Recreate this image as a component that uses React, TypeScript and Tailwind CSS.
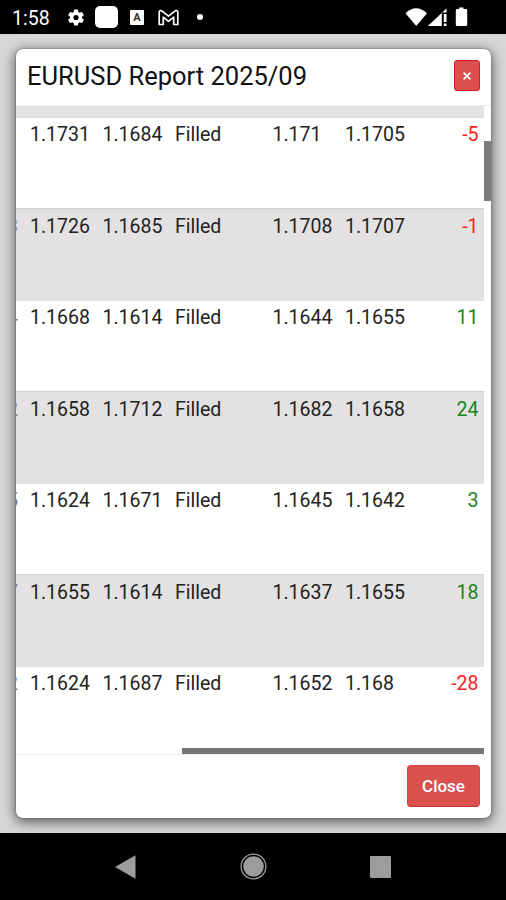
import clsx from 'clsx';

type Trade = {
  size: string;
  stop: string;
  target: string;
  status: string;
  open: string;
  close: string;
  pips: number;
};

const trades: Trade[] = [
  { size: '', stop: '1.1731', target: '1.1684', status: 'Filled', open: '1.171', close: '1.1705', pips: -5 },
  { size: '3', stop: '1.1726', target: '1.1685', status: 'Filled', open: '1.1708', close: '1.1707', pips: -1 },
  { size: '4', stop: '1.1668', target: '1.1614', status: 'Filled', open: '1.1644', close: '1.1655', pips: 11 },
  { size: '2', stop: '1.1658', target: '1.1712', status: 'Filled', open: '1.1682', close: '1.1658', pips: 24 },
  { size: '5', stop: '1.1624', target: '1.1671', status: 'Filled', open: '1.1645', close: '1.1642', pips: 3 },
  { size: '7', stop: '1.1655', target: '1.1614', status: 'Filled', open: '1.1637', close: '1.1655', pips: 18 },
  { size: '2', stop: '1.1624', target: '1.1687', status: 'Filled', open: '1.1652', close: '1.168', pips: -28 },
];

function StatusBar() {
  return (
    <header className="flex h-[34px] shrink-0 items-center bg-black pl-3 text-white">
      <span className="w-[54px] pt-[3px] text-[19.5px] leading-none">1:58</span>
      <svg className="h-[21px] w-[20px]" viewBox="0 0 24 24" fill="currentColor">
        <path d="M19.14 12.94c.04-.3.06-.61.06-.94 0-.32-.02-.64-.07-.94l2.03-1.58a.49.49 0 0 0 .12-.61l-1.92-3.32a.49.49 0 0 0-.59-.22l-2.39.96a7 7 0 0 0-1.62-.94l-.36-2.54a.48.48 0 0 0-.48-.41h-3.84a.47.47 0 0 0-.47.41l-.36 2.54c-.59.24-1.13.57-1.62.94l-2.39-.96a.48.48 0 0 0-.59.22L2.74 8.87a.47.47 0 0 0 .12.61l2.03 1.58a7.6 7.6 0 0 0-.02 1.88l-2.03 1.58a.49.49 0 0 0-.12.61l1.92 3.32c.12.22.37.29.59.22l2.39-.96c.5.38 1.03.7 1.62.94l.36 2.54c.05.24.24.41.48.41h3.84c.24 0 .44-.17.47-.41l.36-2.54a6.8 6.8 0 0 0 1.62-.94l2.39.96c.22.08.47 0 .59-.22l1.92-3.32a.47.47 0 0 0-.12-.61zM12 15.1a3.1 3.1 0 1 1 0-6.2 3.1 3.1 0 0 1 0 6.2" />
      </svg>
      <span className="ml-[9px] h-[22px] w-[23px] rounded-[5px] bg-white" />
      <span className="ml-3 flex h-[15px] w-[14px] items-center justify-center rounded-[1px] bg-white text-[11px] leading-none font-bold text-[#333]">
        A
      </span>
      <svg className="ml-[14px] h-[17px] w-[21px]" viewBox="0 0 21 17" fill="none" stroke="currentColor" strokeWidth="1.7" strokeLinejoin="round">
        <path d="M1.2 3.2Q1.5.8 3.8 1.8l6.7 5.4 6.7-5.4Q19.5.8 19.8 3.2V15.5H15.7V8.2l-5.2 4.1-5.2-4.1v7.3H1.2z" />
      </svg>
      <span className="ml-[18px] h-[6px] w-[6px] rounded-full bg-white" />
      <svg className="mr-[37px] ml-auto h-[20px] w-[64px]" viewBox="0 0 64 20" fill="currentColor">
        <path d="M.5 6.2Q11-3.5 22 6.2L11.2 19z" />
        <path d="M22.8 19 41.5 1.5v4H36.8V19z" />
        <path d="M38.8 7h2.7v8h-2.7zM38.8 16.5h2.7V19h-2.7z" />
        <path d="M54 2V.5h4.5V2h2.5q1.2 0 1.2 1.2v14.6Q62.2 19 61 19h-9q-1.2 0-1.2-1.2V3.2Q50.8 2 52 2z" />
      </svg>
    </header>
  );
}

function TradeRow({ trade, shaded }: { trade: Trade; shaded: boolean }) {
  return (
    <div
      className={clsx(
        'grid shrink-0 grid-cols-[14px_72.5px_72.5px_97.5px_72.5px_1fr_60px] text-[19.5px] leading-[26px]',
        shaded ? 'h-[93px] border-t border-[#d2d1d1] bg-[#e3e1e2] pt-[5px]' : 'h-[90px] bg-white pt-[4px]',
      )}
    >
      {/* column scrolled almost out of view */}
      <div className="flex w-[2px] justify-end overflow-hidden text-[#777]">{trade.size}</div>
      <div>{trade.stop}</div>
      <div>{trade.target}</div>
      <div>{trade.status}</div>
      <div>{trade.open}</div>
      <div>{trade.close}</div>
      <div className={clsx('pr-[5.5px] text-right', trade.pips < 0 ? 'text-[#fa1e1e]' : 'text-[#15851a]')}>
        {trade.pips}
      </div>
    </div>
  );
}

function ReportModal() {
  return (
    <section className="flex h-[769px] flex-col overflow-hidden rounded-[7px] bg-white shadow-[0_3px_12px_2px_rgba(0,0,0,0.5),0_0_2px_rgba(0,0,0,0.5)]">
      <div className="flex h-[57px] shrink-0 items-start justify-between border-b border-[#eeeeee] pt-[11px] pr-[11px] pl-[11px]">
        <h1 className="text-[25.5px] leading-[32px] text-[#111]">EURUSD Report 2025/09</h1>
        <button className="flex h-[31px] w-[26px] items-center justify-center rounded-[3px] border border-[#d01c1c] bg-[#d9504d] text-white">
          <svg className="h-[8px] w-[8px]" viewBox="0 0 8 8" stroke="currentColor" strokeWidth="1.7">
            <path d="M.6.6l6.8 6.8M7.4.6.6 7.4" />
          </svg>
        </button>
      </div>

      <div className="flex h-[649px] shrink-0">
        <div className="flex w-[468px] flex-col">
          <div className="flex h-[642px] flex-col overflow-hidden">
            <div className="h-[12px] shrink-0 bg-[#e3e1e2]" />
            {trades.map((trade, i) => (
              <TradeRow key={i} trade={trade} shaded={i % 2 === 1} />
            ))}
          </div>
          <div className="flex h-[7px] justify-end border-b border-[#eeeeee]">
            <div className="h-[6px] w-[302px] bg-[#757575]" />
          </div>
        </div>
        <div className="flex-1 pt-[35px]">
          <div className="h-[60px] bg-[#7c7c7c]" />
        </div>
      </div>

      <div className="flex justify-end pt-[10px] pr-[11px]">
        <button className="h-[42px] w-[73px] rounded-[4px] border border-[#d64340] border-b-[#c62f2c] bg-[#d9504d] pt-[2px] text-[17px] font-medium text-white">
          Close
        </button>
      </div>
    </section>
  );
}

function NavigationBar() {
  return (
    <nav className="flex h-[67px] shrink-0 items-center bg-black pl-[115px] text-[#9c9c9c]">
      <svg className="h-[24px] w-[21px]" viewBox="0 0 21 24" fill="currentColor">
        <path d="M0 12 20.5.3v23.4z" />
      </svg>
      <svg className="ml-[104px] h-[27px] w-[27px]" viewBox="0 0 27 27" fill="currentColor">
        <circle cx="13.5" cy="13.5" r="10.3" />
        <circle cx="13.5" cy="13.5" r="12.4" fill="none" stroke="currentColor" strokeWidth="1.3" />
      </svg>
      <span className="ml-[102.5px] h-[22px] w-[21px] rounded-[1px] bg-[#9c9c9c]" />
    </nav>
  );
}

export default function App() {
  return (
    <div className="flex h-[900px] w-[506px] flex-col overflow-hidden bg-[#d7d7d7] font-[Roboto,sans-serif] text-[#222]">
      <StatusBar />
      <main className="h-[799px] overflow-hidden pt-[15px] pr-[15px] pl-4">
        <ReportModal />
      </main>
      <NavigationBar />
    </div>
  );
}
